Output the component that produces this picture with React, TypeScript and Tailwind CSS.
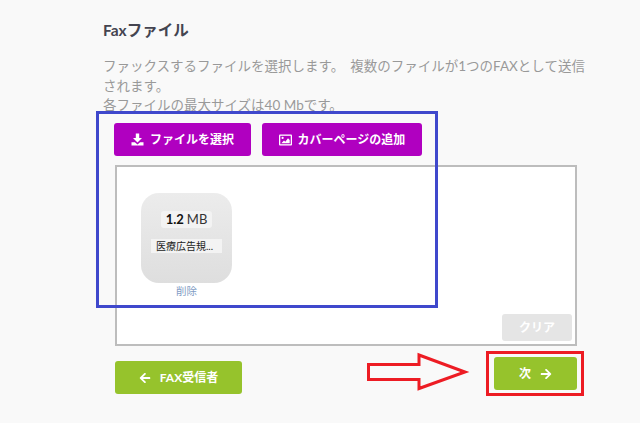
import { FaArrowLeft, FaArrowRight } from "react-icons/fa";

const font = { fontFamily: 'Lato, "Noto Sans CJK JP", sans-serif' };

function Download() {
  return (
    <svg width="13" height="13" viewBox="0 0 13 13" fill="white" aria-hidden="true">
      <path d="M4.800 0.500h3.400v4.500h2.800L6.500 9.400 2 5h2.800z" />
      <path d="M0.500 9.200h3.400L6.500 11.400l2.600-2.200h3.400v3.300H0.500z" />
    </svg>
  );
}

function Picture() {
  return (
    <svg width="13" height="12" viewBox="0 0 13 12" aria-hidden="true">
      <rect x="0" y="0.500" width="13" height="11" rx="1" fill="white" />
      <rect x="1.300" y="1.800" width="10.400" height="8.400" fill="#b000c0" />
      <circle cx="3.600" cy="3.900" r="1.100" fill="white" />
      <path d="M2.300 9.200 L5 6.600 L6.300 7.800 L9 4.200 L10.700 6 V9.200 Z" fill="white" />
    </svg>
  );
}

export default function App() {
  return (
    <div
      className="relative h-[423px] w-[640px] overflow-hidden bg-[#f9f9f9] pl-[103px] pt-[20px]"
      style={font}
    >
      <h2 className="text-[15.5px] leading-[20px] font-bold text-[#444450]">Faxファイル</h2>

      <p className="mt-[17px] w-[492px] text-[13.5px] leading-[19.5px] text-[#999999]">
        ファックスするファイルを選択します。
        <span className="ml-[6px]">複数のファイルが1つのFAXとして送信されます。</span>
        <br />
        各ファイルの最大サイズは40 Mbです。
      </p>

      <div className="ml-[11px] mt-[7.5px] flex gap-[11px]">
        <button className="flex h-[33px] w-[137px] items-center justify-center gap-[6px] rounded-[3px] bg-[#b000c0] text-[12px] font-bold text-white">
          <Download />
          ファイルを選択
        </button>
        <button className="flex h-[33px] w-[160px] items-center justify-center gap-[6px] rounded-[3px] bg-[#b000c0] text-[12px] font-bold text-white">
          <Picture />
          カバーページの追加
        </button>
      </div>

      <div className="ml-[12px] mt-[9px] flex h-[181px] w-[462px] flex-col justify-between border-2 border-[#bdbdbd] bg-white pb-[3px] pl-[24px] pr-[3px] pt-[26px]">
        <div className="flex w-[91px] flex-col items-center">
          <div className="flex h-[90px] w-[91px] flex-col items-center rounded-[18px] bg-gradient-to-b from-[#ececec] to-[#dedede] pt-[18px]">
            <div className="flex h-[17px] items-center gap-[3px] rounded-[3px] bg-[#f3f3f3] px-[5px] text-[13px] leading-[17px] text-[#333]">
              <b className="text-[#111]">1.2</b> MB
            </div>
            <div className="mt-[11px] h-[14px] w-[71px] bg-[#f3f3f3] px-[5px] text-[10px] leading-[14px] whitespace-nowrap text-[#222]">
              医療広告規...
            </div>
          </div>
          <span className="mt-[1px] text-[10.5px] leading-[14px] text-[#7f9cc4]">削除</span>
        </div>
        <div className="flex justify-end">
          <button className="h-[27px] w-[70px] rounded-[3px] bg-[#e5e5e5] text-[12px] font-bold text-white">
            クリア
          </button>
        </div>
      </div>

      <div className="ml-[12px] mt-[15px] flex w-[462px] items-start justify-between">
        <button className="flex h-[33px] w-[127px] items-center justify-center gap-[9px] rounded-[3px] bg-[#96c32c] text-[12px] font-bold text-white">
          <FaArrowLeft size={12} />
          FAX受信者
        </button>
        <button className="mt-[-4px] flex h-[33px] w-[83px] items-center justify-center gap-[9px] rounded-[3px] bg-[#96c32c] text-[12px] font-bold text-white">
          次
          <FaArrowRight size={12} />
        </button>
      </div>

      {/* Annotations drawn over the page */}
      <div className="absolute left-[96px] top-[111px] h-[197px] w-[342px] border-[3px] border-[#3f48cc]" />
      <div className="absolute left-[486px] top-[351px] h-[45px] w-[98px] border-[3px] border-[#ed1c24]" />
      <svg className="absolute left-[366px] top-[350px]" width="110" height="44" viewBox="0 0 110 44" aria-hidden="true">
        <path d="M2.500 14.500 H53 V5 L99 22 L53 38.500 V29.500 H2.500 Z" fill="none" stroke="#ed1c24" strokeWidth="3" />
      </svg>
    </div>
  );
}
